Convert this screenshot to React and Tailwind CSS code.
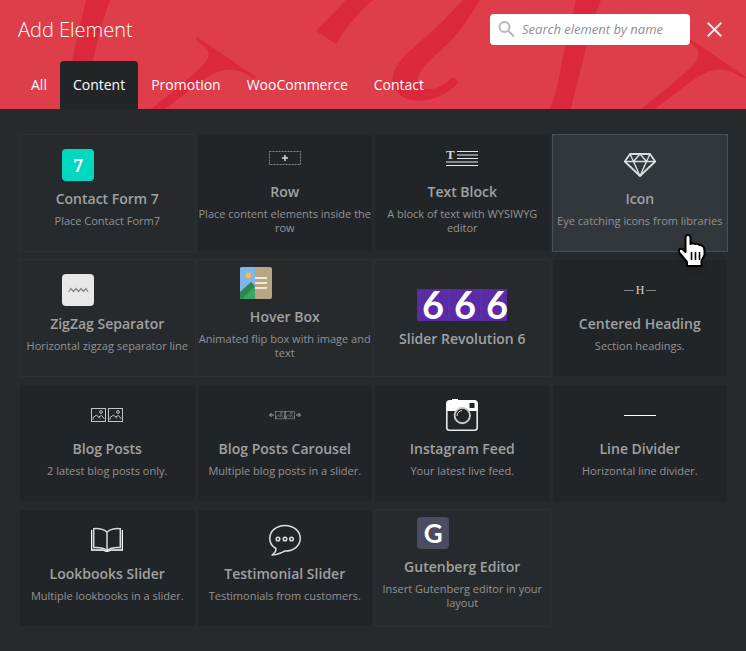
import React from 'react';

function HeaderPattern() {
  return (
    <svg
      className="absolute inset-0 h-full w-full"
      viewBox="0 0 746 109"
      preserveAspectRatio="xMinYMin slice"
      fill="#dc283b"
      aria-hidden="true"
    >
      <path d="M86 0H110C101 24 97 42 93 61C88 80 84 94 81 109H60C66 94 69 80 72 61C76 42 81 22 86 0Z" />
      <path d="M197 37L256 77Q256 79 253 78C236 67 224 67 209 76C197 84 181 97 165 109H151C170 94 185 82 198 70C210 60 211 52 205 47L196 40Z" />
      <g transform="translate(490 0)">
        <path d="M86 0H111C101 24 97 42 93 61C88 80 84 94 81 109H60C66 94 69 80 72 61C76 42 81 22 86 0Z" />
        <path d="M197 37L256 77Q256 79 253 78C236 67 224 67 209 76C197 84 181 97 165 109H151C170 94 185 82 198 70C210 60 211 52 205 47L196 40Z" />
      </g>
      <path d="M346 0L316 31L336 44C346 27 359 12 373 0Z" />
      <path d="M463 0C450 14 438 26 428 35C415 46 406 54 401 60C391 72 390 84 397 92C405 102 422 103 438 97Q450 92 459 82L453 77Q443 87 432 89C420 90 415 83 419 74C425 62 443 50 456 35Q468 20 480 0Z" />
    </svg>
  );
}

function SevenIcon() {
  return (
    <span className="flex size-8 items-center justify-center rounded bg-[#00d9c0] font-['Noto_Serif','DejaVu_Serif',serif] text-lg leading-none font-bold text-white">
      7
    </span>
  );
}

function RowIcon() {
  return (
    <svg width="32" height="32" viewBox="0 0 32 32" fill="none">
      <rect x="0.5" y="9.5" width="31" height="13" stroke="#868889" strokeDasharray="2 1" />
      <path d="M16 13V19M13 16H19" stroke="#d5d6d6" strokeWidth="1.5" />
    </svg>
  );
}

function TextIcon() {
  return (
    <svg width="32" height="32" viewBox="0 0 32 32" fill="none">
      <text x="0" y="17" fill="#d5d6d6" fontFamily="Liberation Serif, serif" fontSize="13" fontWeight="700">
        T
      </text>
      <path d="M11 9.5H32M11 16.5H32M0 23.5H32" stroke="#e6e7e7" />
      <path d="M11 13H32M0 20H32" stroke="#85888a" strokeWidth="2" />
    </svg>
  );
}

function DiamondIcon() {
  return (
    <svg width="32" height="32" viewBox="0 0 32 32" fill="none" stroke="#dcdddd" strokeWidth="1.5" strokeLinejoin="round">
      <path d="M6 5H26L31.2 12.5L16 27L0.8 12.5Z" strokeWidth="1.8" />
      <path d="M1 12.5H31M6 5L9.5 12.5L16 5L22.5 12.5L26 5M9.5 12.5L16 27L22.5 12.5" strokeWidth="1.4" />
    </svg>
  );
}

function ZigZagIcon() {
  return (
    <svg width="32" height="32" viewBox="0 0 32 32" fill="none">
      <rect width="32" height="32" rx="4" fill="#e8e8e8" />
      <path d="M6.5 18L9 14.5L11.5 17.5L14 14.5L16.5 17.5L19 14.5L21.5 17.5L24 14.5L26 18" stroke="#858585" strokeWidth="1.2" />
    </svg>
  );
}

function HoverBoxIcon() {
  return (
    <svg width="32" height="32" viewBox="0 0 32 32">
      <rect width="32" height="32" rx="2" fill="#b9a683" />
      <path d="M2 0H15V32H2Q0 32 0 30V2Q0 0 2 0Z" fill="#80b5ed" />
      <circle cx="8.5" cy="8.5" r="2.7" fill="#fdc02f" />
      <path d="M0 25L11 15L15 19V32H2Q0 32 0 30Z" fill="#2e8653" />
      <path d="M2 32L15 19V32Z" fill="#3ba566" />
      <path d="M15 11H27M15 16H27M15 21H27" stroke="#eee8dc" strokeWidth="2" />
    </svg>
  );
}

function SliderIcon() {
  return (
    <svg className="overflow-visible" width="90" height="32" viewBox="0 0 90 32">
      <rect width="90" height="32" fill="#592ba4" />
      <path d="M32 0V32M64 0V32" stroke="#6236ab" />
      <g fill="#fff" fontFamily="Lato, sans-serif" fontSize="38" fontWeight="700" textAnchor="middle">
        <text x="16" y="30">6</text>
        <text x="48" y="30">6</text>
        <text x="80" y="30">6</text>
      </g>
    </svg>
  );
}

function HeadingIcon() {
  return (
    <svg width="32" height="32" viewBox="0 0 32 32">
      <path d="M0 16.5H10M22 16.5H32" stroke="#85888a" />
      <text x="16" y="20" textAnchor="middle" fill="#d5d6d6" fontFamily="Liberation Serif, serif" fontSize="12">
        H
      </text>
    </svg>
  );
}

function Thumbnail() {
  return (
    <g fill="none" stroke="#c2c4c4">
      <rect x="0.5" y="0.5" width="14" height="13" />
      <circle cx="10" cy="4" r="1.4" />
      <path d="M1.5 10L5.5 7L9 10.5M7.5 9L10.5 7.5L13.5 11M1.5 11.5L3 10.5" />
    </g>
  );
}

function PostsIcon() {
  return (
    <svg width="32" height="32" viewBox="0 0 32 32">
      <g transform="translate(0 9)">
        <Thumbnail />
      </g>
      <g transform="translate(17 9)">
        <Thumbnail />
      </g>
    </svg>
  );
}

function CarouselIcon() {
  return (
    <svg width="32" height="32" viewBox="0 0 32 32" opacity="0.75">
      <g transform="translate(6 12) scale(.64 .58)">
        <Thumbnail />
      </g>
      <g transform="translate(16 12) scale(.64 .58)">
        <Thumbnail />
      </g>
      <path d="M5 16H1M2.5 14L0.5 16L2.5 18M27 16H31M29.5 14L31.5 16L29.5 18" stroke="#d5d6d6" fill="none" />
    </svg>
  );
}

function CameraIcon() {
  return (
    <svg width="32" height="32" viewBox="0 0 32 32">
      <path d="M4 1H6V0H12V1H28Q32 1 32 5V12H0V5Q0 1 4 1Z" fill="#fff" />
      <path d="M0.8 11V28.5Q0.8 31.2 3.5 31.2H28.5Q31.2 31.2 31.2 28.5V11" fill="none" stroke="#e8e8e8" strokeWidth="1.6" />
      <rect x="23.5" y="4" width="5" height="5" fill="#222528" />
      <circle cx="16.3" cy="16.5" r="7.7" fill="#222528" stroke="#c9cbcb" strokeWidth="1.9" />
      <path d="M11 17A5.5 5.5 0 0 1 16 11.5" fill="none" stroke="#d5d6d6" />
    </svg>
  );
}

function LineIcon() {
  return (
    <svg width="32" height="32" viewBox="0 0 32 32">
      <path d="M0 16.5H32" stroke="#fff" />
    </svg>
  );
}

function BookIcon() {
  return (
    <svg width="32" height="32" viewBox="0 0 32 32" fill="none" stroke="#d8d9d9">
      <path d="M2.7 4.7Q11 4 16 8Q21 4 29.3 4.7V23.5Q20 23 16 26.5Q12 23 2.7 23.5Z" strokeWidth="1.5" />
      <path d="M16 8V26" strokeWidth="1.5" />
      <path d="M0.6 6V26H12Q16 28.5 20 26H31.4V6" stroke="#fff" strokeWidth="1.3" />
    </svg>
  );
}

function SpeechIcon() {
  return (
    <svg width="32" height="32" viewBox="0 0 32 32" fill="none" stroke="#dedfdf" strokeWidth="1.5">
      <path d="M7 24.5C2.5 22 .8 18.5 .8 14.5C.8 7 7.5 1.5 16 1.5S31.2 7 31.2 14.5S24.5 27 16 27C12.5 28.5 8 31 3 31C6 29 7 27 7 24.5Z" strokeLinejoin="round" />
      <circle cx="9" cy="15" r="1.8" />
      <circle cx="16" cy="15" r="1.8" />
      <circle cx="22.5" cy="15" r="1.8" />
    </svg>
  );
}

function GutenbergIcon() {
  return (
    <span className="flex size-8 items-center justify-center rounded-sm bg-[#4b4c60] font-[Lato,sans-serif] text-[26px] leading-none font-bold text-white">
      G
    </span>
  );
}

function HandCursor() {
  return (
    <svg
      className="pointer-events-none absolute right-5 -bottom-[18px] z-10 drop-shadow-md"
      width="30"
      height="36"
      viewBox="0 0 30 36"
      aria-hidden="true"
    >
      <path
        d="M8.5 4Q9 2 11 2T13.5 4V11Q15 9.500 18 11Q20 10 22.500 12Q25 11.500 26.500 14Q27.500 15 27.500 18V22L24.500 28V33H10V29L2.500 20Q1 17 3 16Q5 15 8.500 19Z"
        fill="#fff"
        stroke="#000"
        strokeWidth="2"
        strokeLinejoin="round"
      />
      <path d="M14.5 19V27M18.5 19V27M22.5 19V27" stroke="#000" strokeWidth="1.6" />
    </svg>
  );
}

const tabs = ['All', 'Content', 'Promotion', 'WooCommerce', 'Contact'];

const elements = [
  { title: 'Contact Form 7', text: 'Place Contact Form7', icon: SevenIcon, addon: true },
  { title: 'Row', text: 'Place content elements inside the row', icon: RowIcon },
  { title: 'Text Block', text: 'A block of text with WYSIWYG editor', icon: TextIcon },
  { title: 'Icon', text: 'Eye catching icons from libraries', icon: DiamondIcon, active: true },
  { title: 'ZigZag Separator', text: 'Horizontal zigzag separator line', icon: ZigZagIcon, addon: true },
  { title: 'Hover Box', text: 'Animated flip box with image and text', icon: HoverBoxIcon, addon: true },
  { title: 'Slider Revolution 6', icon: SliderIcon, addon: true },
  { title: 'Centered Heading', text: 'Section headings.', icon: HeadingIcon },
  { title: 'Blog Posts', text: '2 latest blog posts only.', icon: PostsIcon },
  { title: 'Blog Posts Carousel', text: 'Multiple blog posts in a slider.', icon: CarouselIcon },
  { title: 'Instagram Feed', text: 'Your latest live feed.', icon: CameraIcon },
  { title: 'Line Divider', text: 'Horizontal line divider.', icon: LineIcon },
  { title: 'Lookbooks Slider', text: 'Multiple lookbooks in a slider.', icon: BookIcon },
  { title: 'Testimonial Slider', text: 'Testimonials from customers.', icon: SpeechIcon },
  { title: 'Gutenberg Editor', text: 'Insert Gutenberg editor in your layout', icon: GutenbergIcon, addon: true },
];

function ElementCard({ item }) {
  const Icon = item.icon;
  let surface = 'border-[#272a2d] bg-[#222528]';
  if (item.addon) surface = 'border-[#2c3033] bg-[#262a2d]';
  if (item.active) surface = 'border-[#4c5256] bg-[#32373b]';
  return (
    <button
      type="button"
      className={`relative flex min-h-[118px] flex-col items-center justify-center border text-center ${surface}`}
    >
      <span className={`flex h-8 w-[90px] ${item.addon ? 'justify-start' : 'justify-center'}`} aria-hidden="true">
        <Icon />
      </span>
      <span className="mt-[10px] text-sm leading-4 font-semibold text-[#a0a1a2]">{item.title}</span>
      {item.text && <span className="mt-[7px] mb-[9px] text-[11px] leading-[14px] text-[#929394]">{item.text}</span>}
      {item.active && <HandCursor />}
    </button>
  );
}

export default function App() {
  return (
    <main className="flex min-h-screen flex-col border-b border-[#211a25] bg-[#262a2d] font-['Open_Sans',sans-serif]">
      <header className="relative overflow-hidden bg-[#de3d4a] text-white">
        <HeaderPattern />
        <div className="relative flex h-[59px] items-center justify-between pr-6 pl-[18px]">
          <h1 className="text-xl font-light">Add Element</h1>
          <div className="flex items-center gap-[17px]">
            <label className="flex h-[31px] w-[200px] items-center gap-[7px] rounded bg-white px-2">
              <svg className="shrink-0" width="17" height="17" viewBox="0 0 17 17" fill="none" stroke="#b4b9be" strokeWidth="2">
                <circle cx="6.5" cy="6" r="5" />
                <path d="M10 9.5L16 15.5" />
              </svg>
              <input
                type="search"
                aria-label="Search element by name"
                placeholder="Search element by name"
                className="w-full min-w-0 text-[13px] text-gray-800 italic outline-none placeholder:text-[#8d8f91]"
              />
            </label>
            <button type="button" aria-label="Close">
              <svg width="15" height="15" viewBox="0 0 15 15" fill="none" stroke="#fbdfe2" strokeWidth="2">
                <path d="M0.7 0.7L14.3 14.3M14.3 0.7L0.7 14.3" />
              </svg>
            </button>
          </div>
        </div>
        <nav className="relative flex px-[18px] pt-0.5">
          {tabs.map((tab) => (
            <button
              key={tab}
              type="button"
              className={`h-12 rounded-t px-[13px] text-sm font-medium ${tab === 'Content' ? 'bg-[#222528]' : ''}`}
            >
              {tab}
            </button>
          ))}
        </nav>
      </header>
      <section className="grid grid-cols-4 gap-x-px gap-y-[7px] py-[25px] pr-[18px] pl-[19px]">
        {elements.map((item) => (
          <ElementCard key={item.title} item={item} />
        ))}
      </section>
    </main>
  );
}
